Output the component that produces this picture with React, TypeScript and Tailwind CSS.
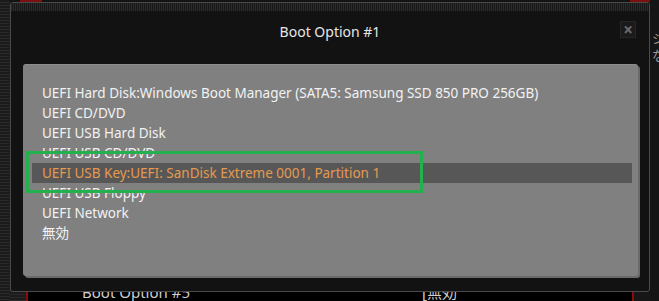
import React from 'react';

const options = [
  'UEFI Hard Disk:Windows Boot Manager (SATA5: Samsung SSD 850 PRO 256GB)',
  'UEFI CD/DVD',
  'UEFI USB Hard Disk',
  'UEFI USB CD/DVD',
  'UEFI USB Key:UEFI: SanDisk Extreme 0001, Partition 1',
  'UEFI USB Floppy',
  'UEFI Network',
  '無効',
];

const selectedIndex = 4;

const font = "font-['Noto_Sans','Noto_Sans_CJK_JP',sans-serif]";

export default function App() {
  return (
    <div className={`relative w-[659px] h-[301px] overflow-hidden bg-[#141414] ${font}`}>
      {/* page behind the dialog */}
      <div className="flex h-full">
        <div className="w-[10px] h-full bg-[repeating-linear-gradient(180deg,#1b1b1b_0_2px,#2a2a2a_2px_3px)]" />
        <div className="flex-1 flex flex-col">
          <div className="h-[2px] flex">
            <div className="w-[10px]" />
            <div className="w-[22px] bg-[#7a1010]" />
            <div className="flex-1" />
            <div className="w-[20px] bg-[#7a1010]" />
          </div>
          <div className="flex-1" />
          <div className="h-[18px] flex">
            <div className="w-[16px] bg-[repeating-linear-gradient(180deg,#1b1b1b_0_2px,#2a2a2a_2px_3px)]" />
            <div className="w-[2px] bg-[#8a0c0c]" />
            <div className="flex-1 bg-black flex items-end text-[15px] leading-[18px] text-[#cfcfcf]">
              <span className="ml-[54px] w-[340px]">Boot Option #5</span>
              <span>[無効</span>
            </div>
            <div className="w-[2px] bg-[#8a0c0c]" />
            <div className="w-[16px] bg-[#161616]" />
          </div>
        </div>
        <div className="w-[9px] h-full bg-[#151515] pt-[30px] pl-[2px] text-[13px] leading-[17px] text-[#9a9a9a] overflow-hidden">
          <div>シ</div>
          <div>な</div>
        </div>
      </div>

      {/* dialog */}
      <div className="absolute left-[10px] top-[2px] w-[640px] h-[290px] flex flex-col bg-[#121212] border border-[#4a4a4a] rounded-[3px] overflow-hidden">
        <div className="h-[8px] bg-[repeating-linear-gradient(90deg,#2c2c2c_0_1px,#181818_1px_2px)]" />
        <div className="relative h-[40px] flex items-center justify-center">
          <span className="text-[14px] text-[#e6e6e6]">Boot Option #1</span>
          <div className="absolute right-[13px] top-[10px] w-[16px] h-[17px] flex items-center justify-center bg-[#1a1a1a] border border-[#262626] text-[#6a6a6a] text-[17px] font-bold leading-none">
            ×
          </div>
        </div>
        <div className="mt-[13px] ml-[12px] w-[615px] h-[212px] pt-[18px] bg-[#808080] rounded-[3px] border-t border-[#8c8c8c] shadow-[2px_2px_0_#6a6a6a] text-[13.5px]">
          {options.map((opt, i) =>
            i === selectedIndex ? (
              <div key={i} className="h-[20px] leading-[20px] ml-[9px] mr-[6px] pl-[10px] bg-[#575757] text-[#e69a50] whitespace-nowrap">
                {opt}
              </div>
            ) : (
              <div key={i} className="h-[20px] leading-[20px] pl-[19px] text-[#f2f2f2] whitespace-nowrap">
                {opt}
              </div>
            )
          )}
        </div>
      </div>

      {/* annotation */}
      <div className="absolute left-[26px] top-[151px] w-[397px] h-[42px] border-[3px] border-[#22b14c]" />
    </div>
  );
}
